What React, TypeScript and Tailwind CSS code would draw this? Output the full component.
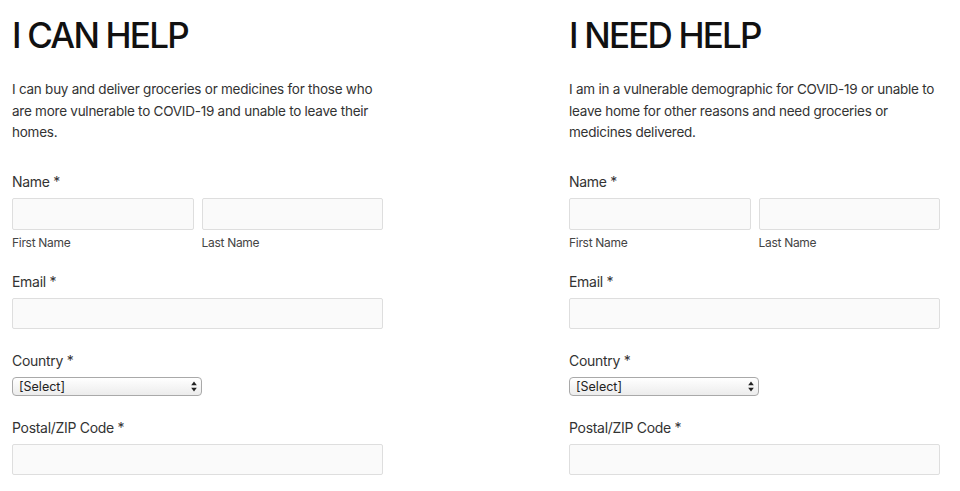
const FONT = "font-['Inter',_'Open_Sans',_sans-serif]";

type Col = { title: string; intro: string };

const COLUMNS: Col[] = [
  {
    title: 'I CAN HELP',
    intro:
      'I can buy and deliver groceries or medicines for those who are more vulnerable to COVID-19 and unable to leave their homes.',
  },
  {
    title: 'I NEED HELP',
    intro:
      'I am in a vulnerable demographic for COVID-19 or unable to leave home for other reasons and need groceries or medicines delivered.',
  },
];

function Label({ children, className = '' }: { children: React.ReactNode; className?: string }) {
  return (
    <label className={`block text-[14px] leading-[20px] tracking-[-0.3px] text-[#333] ${className}`}>{children}</label>
  );
}

function TextBox({ h = 'h-[31px]' }: { h?: string }) {
  return (
    <input
      type="text"
      className={`block w-full ${h} rounded-[2px] border border-[#dedede] bg-[#fafafa] px-2 text-[14px] outline-none`}
    />
  );
}

// little up/down triangles like the native select control
function SelectArrows() {
  return (
    <svg
      className="pointer-events-none absolute right-[5px] top-[4px]"
      width="6"
      height="11"
      viewBox="0 0 6 11"
      fill="#222"
    >
      <path d="M3 0.5 L5.8 4.2 H0.2 Z" />
      <path d="M3 10.5 L5.8 6.8 H0.2 Z" />
    </svg>
  );
}

function HelpForm({ col }: { col: Col }) {
  return (
    <div className="w-[371px]">
      <h1 className="mt-[1px] text-[35px] leading-[44px] font-medium tracking-[-1.8px] text-[#111]">{col.title}</h1>
      <p className="mt-[22px] text-[13.5px] leading-[21.5px] tracking-[-0.25px] text-[#333]">{col.intro}</p>

      <Label className="mt-[28px]">Name *</Label>
      <div className="mt-[6px] grid grid-cols-2 gap-2">
        <div>
          <TextBox h="h-[32px]" />
          <span className="mt-[5px] block text-[12px] leading-[16px] tracking-[-0.3px] text-[#444]">First Name</span>
        </div>
        <div>
          <TextBox h="h-[32px]" />
          <span className="mt-[5px] block text-[12px] leading-[16px] tracking-[-0.3px] text-[#444]">Last Name</span>
        </div>
      </div>

      <Label className="mt-[21px]">Email *</Label>
      <div className="mt-[6px]">
        <TextBox />
      </div>

      <Label className="mt-[22px]">Country *</Label>
      <div className="relative mt-[6px] w-[190px]">
        <select className="block h-[19px] w-full appearance-none rounded-[4px] border border-[#a9a9a9] bg-gradient-to-b from-white to-[#ececec] pl-[6px] text-[12.5px] leading-[17px] text-[#222] outline-none">
          <option>[Select]</option>
        </select>
        <SelectArrows />
      </div>

      <Label className="mt-[22px]">Postal/ZIP Code *</Label>
      <div className="mt-[6px]">
        <TextBox />
      </div>
    </div>
  );
}

export default function App() {
  return (
    <div className={`${FONT} min-h-screen bg-white pl-[12px] pt-[12px]`}>
      <div className="flex gap-[186px]">
        {COLUMNS.map((c) => (
          <HelpForm key={c.title} col={c} />
        ))}
      </div>
    </div>
  );
}
